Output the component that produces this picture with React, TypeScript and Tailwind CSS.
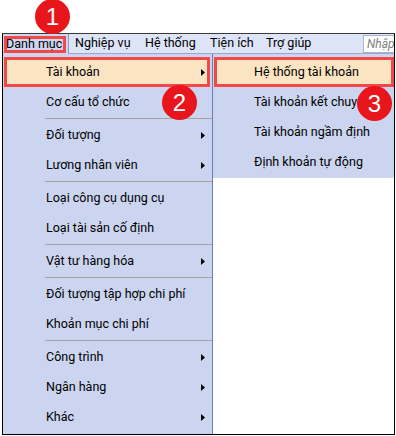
import React from "react";

type Item = { t: string; arrow?: boolean; sel?: boolean } | "sep";

const items: Item[] = [
  { t: "Tài khoản", arrow: true, sel: true },
  { t: "Cơ cấu tổ chức" },
  "sep",
  { t: "Đối tượng", arrow: true },
  { t: "Lương nhân viên", arrow: true },
  "sep",
  { t: "Loại công cụ dụng cụ" },
  { t: "Loại tài sản cố định" },
  "sep",
  { t: "Vật tư hàng hóa", arrow: true },
  "sep",
  { t: "Đối tượng tập hợp chi phí" },
  { t: "Khoản mục chi phí" },
  "sep",
  { t: "Công trình", arrow: true },
  { t: "Ngân hàng", arrow: true },
  { t: "Khác", arrow: true },
];

const sub = [
  { t: "Hệ thống tài khoản", sel: true },
  { t: "Tài khoản kết chuyển" },
  { t: "Tài khoản ngầm định" },
  { t: "Định khoản tự động" },
];

function Arrow() {
  return (
    <svg width="4" height="7" viewBox="0 0 4 7" className="shrink-0">
      <polygon points="0,0 4,3.5 0,7" fill="#000" />
    </svg>
  );
}

function Badge({ n, cls }: { n: string; cls: string }) {
  return (
    <div
      className={
        "absolute w-[35px] h-[35px] rounded-full bg-[#e8161c] text-white flex items-center justify-center text-[24px] leading-none font-['Liberation_Sans',Arial,sans-serif] z-10 " +
        cls
      }
    >
      {n}
    </div>
  );
}

export default function App() {
  return (
    <div className="relative w-[396px] h-[436px] bg-white overflow-hidden font-['Roboto','Liberation_Sans',sans-serif] text-[12.5px] text-black">
      <div className="h-[33px]" />
      <div className="ml-[2px] w-[393px] h-[402px] border-t border-t-[#3a3a3a] border-l border-l-black border-r border-r-black border-b border-b-black flex flex-col">
        {/* menu bar */}
        <div className="h-[20px] flex items-stretch bg-[#dde4f6] shrink-0 whitespace-nowrap">
          <div className="w-[66px] bg-[#cdd6ef] border-r border-r-[#8d9bc8]">
            <div className="ml-[1px] mt-[2px] w-[62px] h-[17px] border-[3px] border-[#f24848] flex items-center leading-none overflow-visible">
              <span className="-ml-[1px]">Danh mục</span>
            </div>
          </div>
          <div className="flex-1 flex items-center border-b border-b-[#9aa7cf] pl-[6px]">
            <span className="w-[70px]">Nghiệp vụ</span>
            <span className="w-[65px]">Hệ thống</span>
            <span className="w-[56px]">Tiện ích</span>
            <span>Trợ giúp</span>
            <div className="ml-auto self-start mt-[1px] w-[31px] h-[18px] bg-white border border-[#a8b4d0] border-r-0 pl-[3px] italic text-[#808080] text-[12px] leading-[16px] overflow-hidden">
              Nhập
            </div>
          </div>
        </div>
        {/* body */}
        <div className="flex flex-1 min-h-0">
          <div className="w-[210px] shrink-0 bg-[#cbd5ef] border-r border-r-[#6c7cb8] pt-[3px]">
            {items.map((it, i) =>
              it === "sep" ? (
                <div key={i} className="h-[3px] pt-px pl-[42px]">
                  <div className="h-px bg-[#a3a3a3]" />
                </div>
              ) : (
                <div
                  key={i}
                  className={
                    "h-[30px] ml-[1px] mr-[2px] border-[3px] flex items-center pl-[39px] pr-[2px] " +
                    (it.sel ? "border-[#f24848] bg-[#fbe4c2]" : "border-transparent")
                  }
                >
                  <span className="flex-1">{it.t}</span>
                  {it.arrow && <Arrow />}
                </div>
              )
            )}
          </div>
          <div className="flex-1 self-start h-[124px] bg-[#cbd5ef] pt-[3px] overflow-hidden">
            {sub.map((it, i) => (
              <div
                key={i}
                className={
                  "h-[30px] ml-[1px] border-[3px] flex items-center pl-[37px] whitespace-nowrap " +
                  (it.sel ? "border-[#f24848] bg-[#fbe4c2]" : "border-transparent")
                }
              >
                {it.t}
              </div>
            ))}
          </div>
        </div>
      </div>
      <Badge n="1" cls="left-[35px] top-[-1px]" />
      <Badge n="2" cls="left-[162px] top-[85px]" />
      <Badge n="3" cls="left-[357px] top-[86px]" />
    </div>
  );
}
